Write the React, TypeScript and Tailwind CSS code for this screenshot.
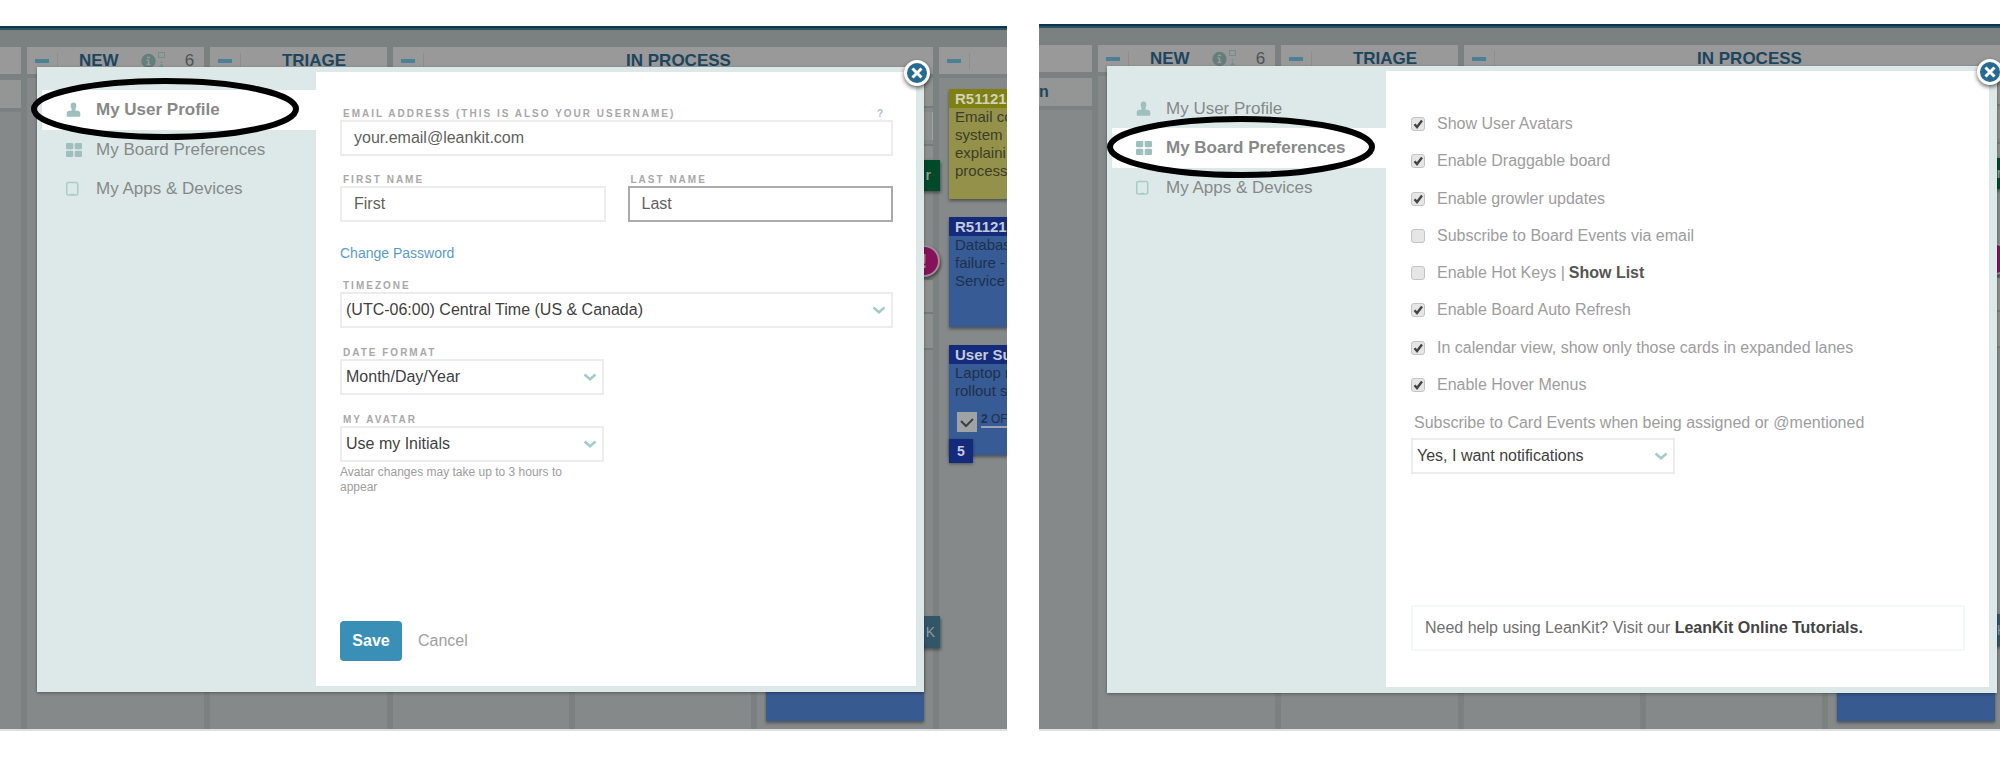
import React from "react";

type MenuKey = "profile" | "board" | "devices";

function UserIcon() {
  return (
    <svg viewBox="0 0 16 16" className="h-4 w-4 shrink-0" fill="#9dbfbe" aria-hidden="true">
      <ellipse cx="7.500" cy="4" rx="2.800" ry="3.400" />
      <path d="M5.500 6.500h4v2.300h2.500c1.500.4 2.300 1.300 2.300 2.700v2c0 .8-.5 1.300-1.300 1.300H2c-.8 0-1.300-.5-1.300-1.300v-2C.7 10.100 1.500 9.200 3 8.800h2.500z" />
    </svg>
  );
}

function BoardIcon() {
  return (
    <svg viewBox="0 0 16 14" className="h-3.5 w-4 shrink-0" fill="#9dbfbe" aria-hidden="true">
      <rect x="0" y="0" width="7.300" height="6.300" rx="1.300" />
      <rect x="8.700" y="0" width="7.300" height="6.300" rx="1.300" />
      <rect x="0" y="7.700" width="7.300" height="6.300" rx="1.300" />
      <rect x="8.700" y="7.700" width="7.300" height="6.300" rx="1.300" />
    </svg>
  );
}

function DeviceIcon() {
  return (
    <svg viewBox="0 0 16 16" className="h-4 w-4 shrink-0" fill="none" stroke="#a9cbc9" aria-hidden="true">
      <rect x="0.700" y="1.500" width="11" height="12.500" rx="1.500" strokeWidth="1.500" />
      <path d="M4.500 13.500h3.500" strokeWidth="1.500" />
    </svg>
  );
}

function Chevron() {
  return (
    <svg viewBox="0 0 14 8" className="pointer-events-none absolute top-3.5 right-[7px] h-2 w-3.5" fill="none" stroke="#a3cdcb" strokeWidth="2.600" aria-hidden="true">
      <path d="M1.500 1.500 7 6.200l5.500-4.700" />
    </svg>
  );
}

function LaneHeader({ title, className, stats }: { title: string; className: string; stats?: boolean }) {
  return (
    <div className={"flex h-[27px] shrink-0 items-center bg-[#999] " + className}>
      <span className="ml-2 h-1 w-3.5 shrink-0 bg-[#4b8099]" />
      <span className="ml-2 h-4 w-px shrink-0 bg-[#8a8f8f]" />
      <span className={"text-[17px] leading-5 font-bold whitespace-nowrap text-[#1d455d] " + (stats ? "ml-[21px]" : "flex-1 text-center")}>
        {title}
      </span>
      {stats && (
        <>
          <svg viewBox="0 0 26 18" className="ml-[22px] h-[18px] w-[26px] shrink-0" aria-hidden="true">
            <circle cx="7.500" cy="9" r="7.200" fill="#647e7b" />
            <path d="M6 5.500h3M7.500 8v4.500M5.500 12.500h4M5.500 8h2" fill="none" stroke="#999" strokeWidth="1.600" />
            <rect x="17.500" y="0.500" width="6" height="5" fill="none" stroke="#71908d" />
            <path d="M20.500 9.500v1.500M20.500 12v3.500M18.500 14.500h4" stroke="#71908d" strokeWidth="1.600" />
          </svg>
          <span className="ml-[18px] text-[17px] leading-5 text-[#4d5456]">6</span>
        </>
      )}
    </div>
  );
}

function Card({ id, lines, tone, children }: { id: string; lines: string[]; tone: "yellow" | "blue"; children?: React.ReactNode }) {
  const head = tone === "yellow" ? "bg-[#7f8010] text-[#d2d2bb]" : "bg-[#142b7c] text-[#c3cadb]";
  const body = tone === "yellow" ? "bg-[#94924a] text-[#3c3d27]" : "bg-[#375b94] text-[#1e3050]";
  return (
    <div className={"relative h-[110px] w-40 shrink-0 shadow-[0_2px_3px_rgba(0,0,0,0.4)] " + body}>
      <div className={"h-[19px] pl-1.5 text-[15px] leading-[19px] font-bold whitespace-nowrap " + head}>{id}</div>
      {lines.map((l) => (
        <div key={l} className="pl-1.5 text-[15px] leading-[18px] whitespace-nowrap">{l}</div>
      ))}
      {children}
    </div>
  );
}

/* Dimmed board behind the dialog. */
function Board({ stubClass, stubText }: { stubClass: string; stubText?: string }) {
  return (
    <div className="absolute inset-0 flex flex-col overflow-hidden bg-[#7b8180]" aria-hidden="true">
      <div className="h-1 shrink-0 border-b-2 border-[#2c5260] bg-[#0b3650]" />
      <div className="flex flex-1 gap-1.5 pt-[17px]">
        <div className={"flex shrink-0 flex-col " + stubClass}>
          <div className="h-[27px] bg-[#999]" />
          <div className="mt-1.5 h-7 bg-[#949595] text-base leading-7 font-bold text-[#1d455d]">{stubText}</div>
          <div className="mt-1 flex-1 bg-[#858989]" />
        </div>
        <div className="flex w-[177px] shrink-0 flex-col gap-1">
          <LaneHeader title="NEW" className="w-full" stats />
          <div className="flex-1 bg-[#858989]" />
        </div>
        <div className="flex w-[177px] shrink-0 flex-col gap-1">
          <LaneHeader title="TRIAGE" className="w-full" />
          <div className="flex-1 bg-[#858989]" />
        </div>
        <div className="flex w-[540px] shrink-0 flex-col gap-1">
          <LaneHeader title="IN PROCESS" className="w-full" />
          <div className="flex flex-1 gap-1.5">
            <div className="flex-1 bg-[#858989]" />
            <div className="flex-1 bg-[#858989]" />
            <div className="relative flex flex-1 flex-col bg-[#858989]">
              <div className="h-[30px] border-b-2 border-[#757c7c] bg-[#909191]" />
              <div className="mt-1 h-7 border-r border-[#a3a5a5] bg-[#8d8f8f]" />
              <div className="mt-1 h-3.5 border-t-2 border-[#757c7c] bg-[#8d8f8f]" />
              <div className="mt-[120px] h-9 border-y-2 border-[#757c7c] bg-[#8d8f8f]" />
              <div className="h-9 border-b-2 border-[#757c7c] bg-[#8d8f8f]" />
              <div className="absolute top-[82px] -right-[7px] h-[31px] w-8 bg-[#02482b] pr-[9px] text-right text-sm leading-[31px] font-bold text-[#8d9a92] shadow-[1px_2px_3px_rgba(0,0,0,0.4)]">r</div>
              <div className="absolute top-[167px] -right-[7px] flex h-8 w-8 items-center justify-center rounded-full border-2 border-[#a08e99] bg-[#86105a] text-xl font-bold text-[#b78fa7] shadow-[1px_2px_3px_rgba(0,0,0,0.5)]">!</div>
              <div className="absolute top-[538px] -right-[7px] h-8 w-8 bg-[#335667] pr-[5px] text-right text-sm leading-8 text-[#8d9a9d] shadow-[1px_2px_3px_rgba(0,0,0,0.4)]">K</div>
              <div className="absolute right-[9px] bottom-2 h-20 w-[158px] bg-[#375a91] shadow-[0_2px_3px_rgba(0,0,0,0.4)]" />
            </div>
          </div>
        </div>
        <div className="flex w-[177px] shrink-0 flex-col gap-1">
          <LaneHeader title="" className="w-full" />
          <div className="flex flex-1 flex-col gap-[18px] bg-[#858989] pt-[11px] pl-2.5">
            <Card id="R51121" tone="yellow" lines={["Email co", "system", "explaini", "process"]} />
            <Card id="R51121" tone="blue" lines={["Databas", "failure -", "Service"]} />
            <Card id="User Su" tone="blue" lines={["Laptop r", "rollout s"]}>
              <div className="mt-3 ml-2 flex items-start gap-1">
                <svg viewBox="0 0 20 20" className="h-5 w-5 shrink-0">
                  <rect width="20" height="20" fill="#a0a3a6" />
                  <path d="M4 9l5 5 7-7" fill="none" stroke="#3a4046" strokeWidth="2" />
                </svg>
                <div className="w-24 border-b-2 border-[#9aa3b3] text-xs leading-[14px]"><b>2</b> OF</div>
              </div>
              <div className="absolute -bottom-2 left-0 h-6 w-6 bg-[#142b7c] text-center text-sm leading-6 font-bold text-[#c3cadb] shadow-[0_1px_3px_rgba(0,0,0,0.4)]">5</div>
            </Card>
          </div>
        </div>
      </div>
      <div className="h-0.5 shrink-0 bg-[#dfe0e0]" />
    </div>
  );
}

const menu: { key: MenuKey; label: string; icon: React.ReactNode }[] = [
  { key: "profile", label: "My User Profile", icon: <UserIcon /> },
  { key: "board", label: "My Board Preferences", icon: <BoardIcon /> },
  { key: "devices", label: "My Apps & Devices", icon: <DeviceIcon /> },
];

function Highlight({ className }: { className: string }) {
  return (
    <svg viewBox="0 0 268 62" className={"pointer-events-none absolute -top-3 z-10 h-[62px] w-[268px] " + className} aria-hidden="true">
      <ellipse cx="134" cy="31" rx="131" ry="28" fill="none" stroke="#000" strokeWidth="6" />
    </svg>
  );
}

function Dialog({ active, children }: { active: MenuKey; children: React.ReactNode }) {
  return (
    <section className="relative flex min-h-[625px] border-t-[5px] border-r-8 border-b-[6px] border-l-[5px] border-[#dde9e8] bg-white shadow-[0_1px_3px_rgba(0,0,0,0.35)]">
      <nav className="w-[274px] shrink-0 bg-[#dde9e8] pt-[18px]">
        <ul>
          {menu.map((m) => {
            const on = m.key === active;
            return (
              <li key={m.key} className={"relative " + (on ? "h-10 bg-white" : "h-[39px]")}>
                <a
                  href={"#" + m.key}
                  className={"flex h-full items-center gap-[14px] pl-6 text-[17px] leading-5 whitespace-nowrap text-[#868989] " + (on ? "font-bold" : "")}
                >
                  {m.icon}
                  {m.label}
                </a>
                {on && <Highlight className={m.key === "board" ? "-left-[5px]" : "-left-[11px]"} />}
              </li>
            );
          })}
        </ul>
      </nav>
      <div className="min-w-0 flex-1">{children}</div>
      <button type="button" aria-label="Close" className="absolute -top-3 -right-[14px] flex h-[26px] w-[26px] items-center justify-center rounded-full border-[3px] border-white bg-[#266a92] shadow-[0_2px_4px_rgba(0,0,0,0.6)]">
        <svg viewBox="0 0 12 12" className="h-3 w-3" stroke="#fff" strokeWidth="3" aria-hidden="true">
          <path d="M1.500 1.500l9 9M10.500 1.500l-9 9" />
        </svg>
      </button>
    </section>
  );
}

const labelClass = "flex justify-between pt-0.5 pr-2 pl-[3px] text-[10px] leading-3 font-bold tracking-[2px] text-[#a8a8a8] uppercase";
const inputClass = "block h-9 w-full border-2 bg-white px-3 text-base text-[#5f5f5f] outline-none ";
const selectClass = "block h-9 w-full appearance-none border-2 border-[#ececec] bg-white pr-7 pl-1 text-base text-[#3f3f3f] outline-none";

function TextField({ id, label, value, hint, focused }: { id: string; label: string; value: string; hint?: string; focused?: boolean }) {
  return (
    <div>
      <label htmlFor={id} className={labelClass}>
        <span>{label}</span>
        {hint && <span className="text-[#a3c3c2]">{hint}</span>}
      </label>
      <input id={id} type="text" defaultValue={value} className={inputClass + (focused ? "border-[#ababab]" : "border-[#ececec]")} />
    </div>
  );
}

function SelectField({ id, label, value }: { id: string; label: string; value: string }) {
  return (
    <div>
      <label htmlFor={id} className={labelClass}>{label}</label>
      <div className="relative">
        <select id={id} defaultValue={value} className={selectClass}>
          <option>{value}</option>
        </select>
        <Chevron />
      </div>
    </div>
  );
}

function ProfileForm() {
  return (
    <form className="pt-[34px] pr-[23px] pb-6 pl-6" onSubmit={(e) => e.preventDefault()}>
      <div className="grid grid-cols-2 gap-x-[22px] gap-y-4">
        <div className="col-span-2">
          <TextField id="email" label="Email address (this is also your username)" value="your.email@leankit.com" hint="?" />
        </div>
        <TextField id="first" label="First name" value="First" />
        <TextField id="last" label="Last name" value="Last" focused />
      </div>
      <a href="#password" className="mt-[21px] block text-sm leading-5 text-[#5b9cc4]">Change Password</a>
      <div className="mt-[15px]">
        <SelectField id="timezone" label="Timezone" value="(UTC-06:00) Central Time (US & Canada)" />
      </div>
      <div className="mt-[17px] flex w-[264px] flex-col gap-[17px]">
        <SelectField id="date" label="Date format" value="Month/Day/Year" />
        <SelectField id="avatar" label="My avatar" value="Use my Initials" />
      </div>
      <p className="mt-[3px] w-[240px] text-xs leading-[15px] text-[#9d9d9d]">Avatar changes may take up to 3 hours to appear</p>
      <div className="mt-[126px] flex items-center gap-4">
        <button type="submit" className="h-10 w-[62px] rounded bg-[#3a8fb7] text-base font-bold text-white">Save</button>
        <button type="button" className="text-base text-[#a0a0a0]">Cancel</button>
      </div>
    </form>
  );
}

const options: { label: string; checked: boolean; link?: string }[] = [
  { label: "Show User Avatars", checked: true },
  { label: "Enable Draggable board", checked: true },
  { label: "Enable growler updates", checked: true },
  { label: "Subscribe to Board Events via email", checked: false },
  { label: "Enable Hot Keys |", checked: false, link: "Show List" },
  { label: "Enable Board Auto Refresh", checked: true },
  { label: "In calendar view, show only those cards in expanded lanes", checked: true },
  { label: "Enable Hover Menus", checked: true },
];

function BoardPreferences() {
  return (
    <form className="pt-[43px] pr-6 pb-9 pl-[25px]" onSubmit={(e) => e.preventDefault()}>
      <ul className="flex h-[281px] flex-col justify-between">
        {options.map((o, i) => (
          <li key={o.label} className="flex h-5 items-center text-base text-[#9d9d9d]">
            <span className="relative h-3.5 w-3.5">
              <input id={"opt" + i} type="checkbox" defaultChecked={o.checked} className="peer block h-3.5 w-3.5 appearance-none rounded-[3px] border border-[#c4c4c4] bg-[#e6e6e6]" />
              <svg viewBox="0 0 14 14" className="pointer-events-none absolute inset-0 hidden h-3.5 w-3.5 peer-checked:block" fill="none" stroke="#444" strokeWidth="2.400" aria-hidden="true">
                <path d="M3.500 7.200l2.500 2.800 5-6.500" />
              </svg>
            </span>
            <label htmlFor={"opt" + i} className="ml-3">{o.label}</label>
            {o.link && <a href="#keys" className="ml-1 font-bold text-[#555]">{o.link}</a>}
          </li>
        ))}
      </ul>
      <label htmlFor="notify" className="mt-[18px] block pl-[3px] text-base leading-5 text-[#9d9d9d]">
        Subscribe to Card Events when being assigned or @mentioned
      </label>
      <div className="relative mt-[5px] w-[264px]">
        <select id="notify" defaultValue="Yes, I want notifications" className={selectClass}>
          <option>Yes, I want notifications</option>
        </select>
        <Chevron />
      </div>
      <p className="mt-[131px] border-2 border-[#f3f8f8] px-3 py-[11px] text-base leading-5 text-[#707070]">
        Need help using LeanKit? Visit our <a href="#tutorials" className="font-bold text-[#444]">LeanKit Online Tutorials.</a>
      </p>
    </form>
  );
}

export default function App() {
  return (
    <main className="grid min-h-screen grid-cols-[1007fr_961fr] items-start gap-8 overflow-hidden bg-white pt-6 font-['Liberation_Sans',Arial,sans-serif]">
      <div className="relative mt-0.5 overflow-hidden pt-[41px] pr-[83px] pb-[39px] pl-[37px]">
        <Board stubClass="w-[21px]" />
        <Dialog active="profile">
          <ProfileForm />
        </Dialog>
      </div>
      <div className="relative overflow-hidden pt-[42px] pr-[3px] pb-[38px] pl-[68px]">
        <Board stubClass="w-[53px]" stubText="n" />
        <Dialog active="board">
          <BoardPreferences />
        </Dialog>
      </div>
    </main>
  );
}
